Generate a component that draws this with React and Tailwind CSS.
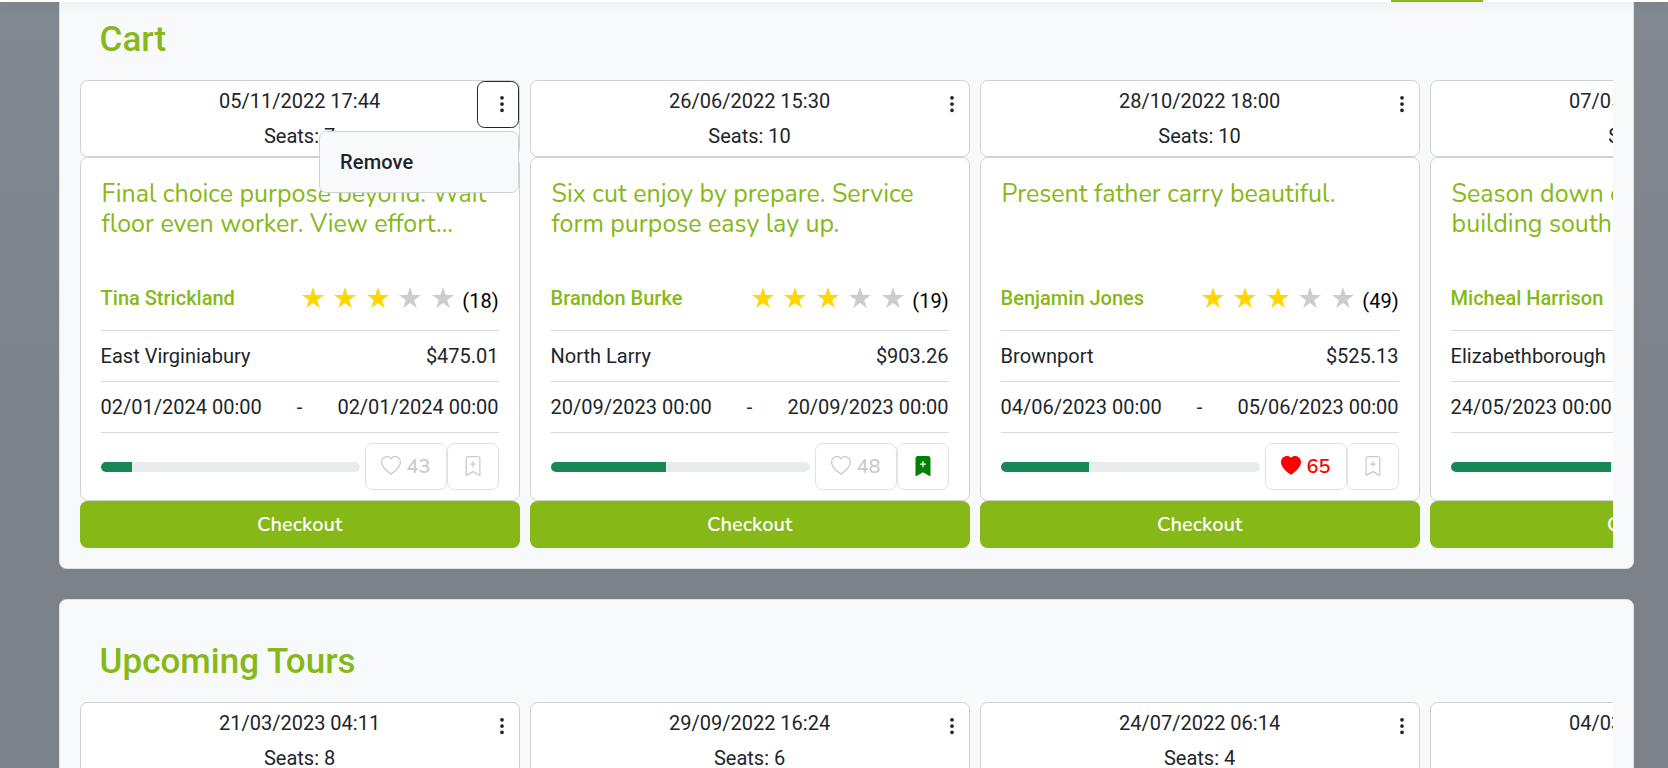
import { BsHeart, BsHeartFill, BsBookmarkPlus, BsBookmarkPlusFill, BsThreeDotsVertical } from "react-icons/bs";

const cart = [
  { date: "05/11/2022 17:44", seats: 7, title: ["Final choice purpose beyond. Wait", "floor even worker. View effort..."], name: "Tina Strickland", count: 18, place: "East Virginiabury", price: "$475.01", from: "02/01/2024 00:00", to: "02/01/2024 00:00", progress: 12, likes: 43, open: true },
  { date: "26/06/2022 15:30", seats: 10, title: ["Six cut enjoy by prepare. Service", "form purpose easy lay up."], name: "Brandon Burke", count: 19, place: "North Larry", price: "$903.26", from: "20/09/2023 00:00", to: "20/09/2023 00:00", progress: 44.4, likes: 48, saved: true },
  { date: "28/10/2022 18:00", seats: 10, title: ["Present father carry beautiful."], name: "Benjamin Jones", count: 49, place: "Brownport", price: "$525.13", from: "04/06/2023 00:00", to: "05/06/2023 00:00", progress: 34, likes: 65, liked: true },
  { date: "07/05/2022 12:30", seats: 10, title: ["Season down each", "building south"], name: "Micheal Harrison", count: 22, place: "Elizabethborough", price: "$610.40", from: "24/05/2023 00:00", to: "25/05/2023 00:00", progress: 62, likes: 51 },
];

const upcoming = [
  { date: "21/03/2023 04:11", seats: 8 },
  { date: "29/09/2022 16:24", seats: 6 },
  { date: "24/07/2022 06:14", seats: 4 },
  { date: "04/03/2023 09:20", seats: 5 },
];

function Star({ on }) {
  return (
    <svg viewBox="0 0 21 20" preserveAspectRatio="none" className={`h-[21px] w-[22px] ${on ? "text-[#ffd700]" : "text-[#ccc]"}`} fill="currentColor">
      <path d="M10.5 0l2.5 7.6h8l-6.5 4.7 2.5 7.7-6.5-4.8L4 20l2.5-7.7L0 7.6h8z" />
    </svg>
  );
}

function CardHeader({ item }) {
  return (
    <div className="relative flex h-[77px] flex-col items-center gap-[5px] rounded-[7.5px] border border-[#d0d1d3] bg-white py-[5px] leading-[30px]">
      <div>{item.date}</div>
      <div>Seats: {item.seats}</div>
      <button className={`absolute right-0 top-0 flex h-[47px] w-[42px] items-center rounded-[7.5px] border pb-[2px] pl-[14.5px] ${item.open ? "border-[#212529]" : "border-transparent"}`}>
        <BsThreeDotsVertical size={20} />
      </button>
      {item.open && (
        <div className="absolute right-0 top-[50px] z-10 flex h-[62px] w-[200px] items-center rounded-[7.5px] border border-[#d0d1d3] bg-[#f8f9fb] pl-[20.5px] font-medium tracking-[0.15px]">
          Remove
        </div>
      )}
    </div>
  );
}

function TourCard({ item }) {
  return (
    <div className="w-[440px] shrink-0">
      <CardHeader item={item} />
      <div className="h-[344px] rounded-[7.5px] border border-[#d0d1d3] bg-white px-5 pt-[21px]">
        <div className="h-[88px] whitespace-nowrap pl-px font-[Nunito,Lato,sans-serif] text-[25px] leading-[30px] text-[#86b817]">
          {item.title.map((line) => (
            <div key={line}>{line}</div>
          ))}
        </div>
        <div className="flex h-[64px] items-center justify-between border-b border-[#d8d9db] pb-[2px]">
          <div className="font-medium text-[#86b817]">{item.name}</div>
          <div className="flex items-center">
            <div className="flex gap-[10.5px]">
              {[1, 2, 3, 4, 5].map((n) => (
                <Star key={n} on={n <= 3} />
              ))}
            </div>
            <div className="ml-[8.5px] mt-[6px] text-black">({item.count})</div>
          </div>
        </div>
        <div className="flex h-[51px] items-center justify-between border-b border-[#d8d9db]">
          <span>{item.place}</span>
          <span>{item.price}</span>
        </div>
        <div className="flex h-[51px] items-center justify-between border-b border-[#d8d9db]">
          <span>{item.from}</span>
          <span>-</span>
          <span>{item.to}</span>
        </div>
        <div className="flex items-center pt-[10px]">
          <div className="mr-[5px] h-[10px] w-[259px] overflow-hidden rounded-[5px] bg-[#e9ecef]">
            <div className="h-full bg-[#198754]" style={{ width: `${item.progress}%` }} />
          </div>
          <button className={`flex h-[47px] w-[82px] items-center rounded-[7.5px] border border-[#dee2e6] pl-[15px] font-[Nunito,Lato,sans-serif] ${item.liked ? "text-[red]" : "text-[#ccc]"}`}>
            {item.liked ? <BsHeartFill size={20} className="-mt-px" /> : <BsHeart size={20} className="-mt-px" />}
            <span className="ml-[6px] font-semibold">{item.likes}</span>
          </button>
          <button className={`flex h-[47px] w-[52px] items-center justify-center rounded-[7.5px] border border-[#dee2e6] pb-px ${item.saved ? "text-[green]" : "text-[#ccc]"}`}>
            {item.saved ? <BsBookmarkPlusFill size={20} /> : <BsBookmarkPlus size={20} />}
          </button>
        </div>
      </div>
      <button className="h-[47px] w-full rounded-[7.5px] bg-[#86b817] font-[Nunito,Lato,sans-serif] font-semibold text-white">Checkout</button>
    </div>
  );
}

function Panel({ title, children }) {
  return (
    <section className="mx-auto w-[1575px] shrink-0 rounded-[7.5px] border border-[#dee2e6] bg-[#f8f9fb] p-5">
      <h2 className="px-5 pb-[19px] pt-[21px] text-[35px] font-medium leading-[42px] text-[#86b817]">{title}</h2>
      <div className="flex gap-[10px] overflow-hidden">{children}</div>
    </section>
  );
}

export default function App() {
  return (
    <div className="h-[768px] w-[1668px] overflow-hidden bg-linear-to-b from-[#81888f] to-[#7b8288] to-60% font-[Roboto,sans-serif] text-[20px] leading-[30px] text-[#212529]">
      <nav className="relative z-20 flex h-[2px] bg-white pl-[1391px] shadow-[0_2px_12px_rgba(0,0,0,0.15)]">
        <div className="h-full w-[92px] bg-[#86b817]" />
      </nav>
      <main className="-mt-[25px] flex flex-col gap-[30px] pl-[24.2px]">
        <Panel title="Cart">
          {cart.map((item) => (
            <TourCard key={item.date} item={item} />
          ))}
        </Panel>
        <Panel title="Upcoming Tours">
          {upcoming.map((item) => (
            <div key={item.date} className="w-[440px] shrink-0">
              <CardHeader item={item} />
            </div>
          ))}
        </Panel>
      </main>
    </div>
  );
}
